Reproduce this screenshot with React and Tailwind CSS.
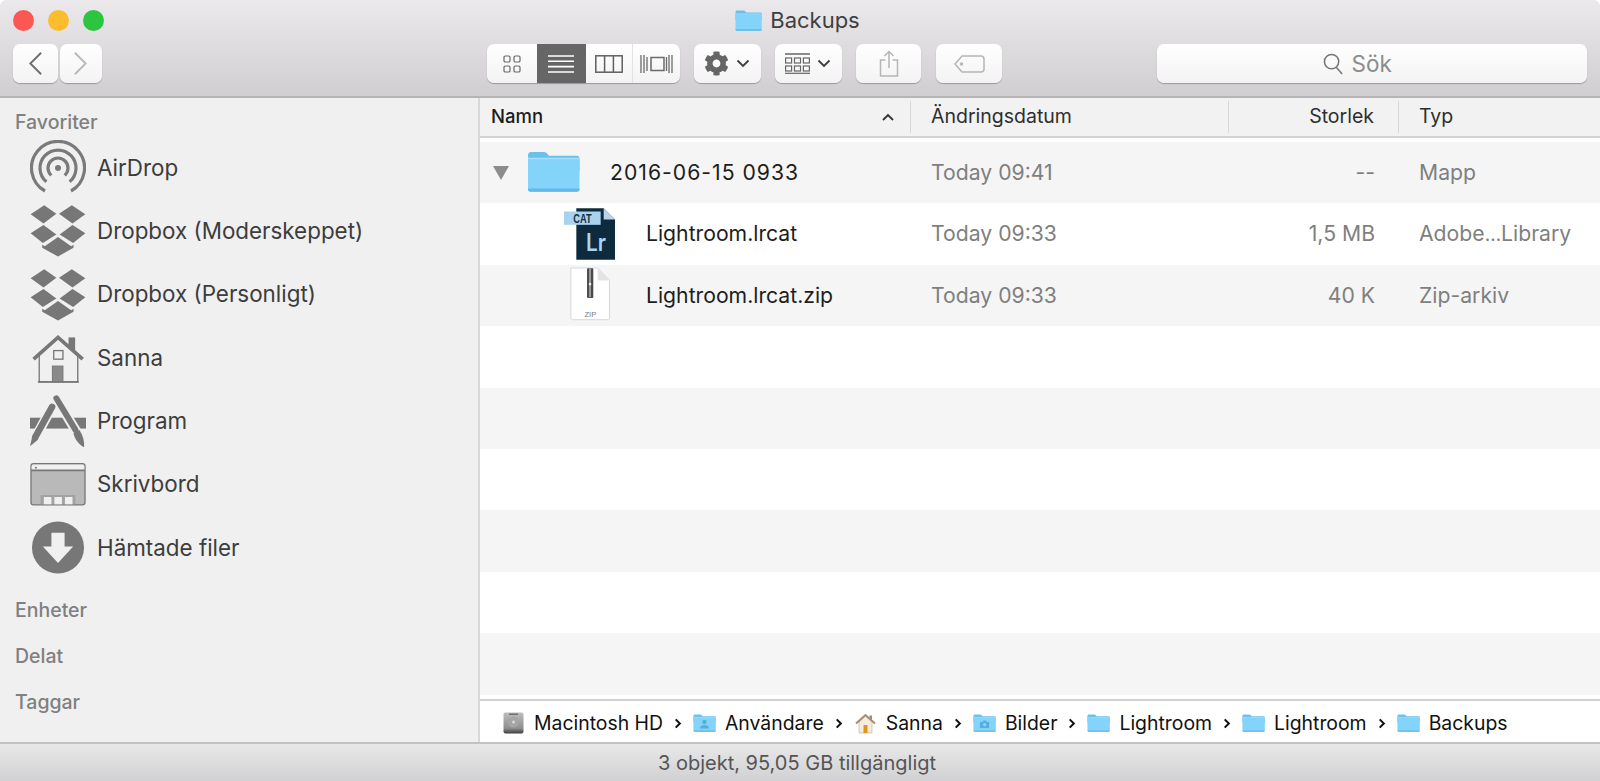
import React from "react";
import { FaCog } from "react-icons/fa";

const Folder = ({ className, glyph }) => {
  return (
    <svg viewBox="0 0 53 41" className={className}>
      <path d="M1 4.500C1 2.500 2 1 4 1h13c1.500 0 2.500.7 3.500 2l1.500 1.800H50c1.500 0 2.500 1 2.500 2.500V20H1z" fill="#6cc1ec" />
      <path d="M1 7.500h51.500V38c0 1.700-1 2.700-2.700 2.700H3.700C2 40.700 1 39.700 1 38z" fill="#83d3fb" />
      <path d="M1 6.800h51.500v1.400H1z" fill="#a4e0fd" />
      <path d="M1 37.500h51.500V38c0 1.700-1 2.700-2.700 2.700H3.700C2 40.700 1 39.700 1 38z" fill="#62b8e6" />
      {glyph === "user" && (
        <g fill="#55aede">
          <circle cx="26.500" cy="18" r="5" />
          <path d="M16 33c1-6 5-8 10.500-8S36 27 37 33z" />
        </g>
      )}
      {glyph === "cam" && (
        <g fill="#55aede">
          <path d="M16 18h6l2-3h6l2 3h5v14H16z" />
          <circle cx="27" cy="24.500" r="4" fill="#83d3fb" />
        </g>
      )}
    </svg>
  );
};

const AirDrop = () => (
  <svg viewBox="0 0 56 56" className="w-[56px] h-[56px]" fill="none" stroke="#7a7a7a" strokeWidth="3.200">
    <path d="M15 51 A26.500 26.500 0 1 1 41 51" />
    <path d="M16.400 41.800 A18 18 0 1 1 39.600 41.800" />
    <path d="M21.300 35.400 A10 10 0 1 1 34.700 35.400" />
    <circle cx="28" cy="28" r="3" fill="#7a7a7a" stroke="none" />
  </svg>
);

const Dropbox = () => (
  <svg viewBox="90 252 170 160" className="w-[56px] h-[53px]" fill="#777777">
    <path d="M92 283 L133 255 L170 281 L131 311 Z" />
    <path d="M258 283 L217 255 L178 281 L219 311 Z" />
    <path d="M92 340 L131 315 L170 344 L129 370 Z" />
    <path d="M258 340 L219 315 L180 344 L221 370 Z" />
    <path d="M175 352 L215 380 L222 375 L222 384 L175 411 L127 384 L127 375 L135 380 Z" />
  </svg>
);

const Home = () => (
  <svg viewBox="90 33 170 155" className="w-[56px] h-[52px]" fill="none" stroke="#777777">
    <rect x="207" y="48" width="20" height="40" fill="#777777" stroke="none" />
    <path d="M118 100V183H235V100L175 50z" fill="#f0f0f0" strokeWidth="4" />
    <path d="M101 114 L175 48 L250 114" strokeWidth="11" />
    <rect x="162" y="88" width="28" height="26" strokeWidth="4" />
    <rect x="158" y="135" width="32" height="48" fill="#8a8a8a" strokeWidth="3" />
    <path d="M114 183H238" strokeWidth="5" />
  </svg>
);

const AppStore = () => (
  <svg viewBox="90 222 170 162" className="w-[56px] h-[54px]">
    <rect x="90" y="293" width="170" height="33" fill="#777777" />
    <path d="M157 260 L103 360" stroke="#f0f0f0" strokeWidth="30" />
    <path d="M170 234 L235 342" stroke="#f0f0f0" strokeWidth="30" />
    <path d="M157 260 L106 352" stroke="#777777" strokeWidth="20" strokeLinecap="round" />
    <path d="M97 349 L115 359 L90 380 Z" fill="#777777" />
    <path d="M170 234 L228 330" stroke="#777777" strokeWidth="18" strokeLinecap="round" />
    <path d="M222 340 L240 330 C250 345 256 365 254 383 C240 375 226 360 222 340 Z" fill="#777777" />
  </svg>
);

const Desktop = () => (
  <svg viewBox="90 425 170 130" className="w-[56px] h-[43px]">
    <rect x="93" y="427" width="164" height="125" rx="8" fill="#b9b9b9" stroke="#777777" strokeWidth="4" />
    <path d="M95 446V435c0-4 2-6 6-6h148c4 0 6 2 6 6v11z" fill="#f0f0f0" />
    <path d="M93 447H257" stroke="#777777" strokeWidth="5" />
    <circle cx="108" cy="439" r="3" fill="#777777" />
    <rect x="122" y="522" width="106" height="28" fill="#a3a3a3" />
    <rect x="132" y="528" width="23" height="22" fill="#f0f0f0" />
    <rect x="164" y="528" width="23" height="22" fill="#f0f0f0" />
    <rect x="196" y="528" width="23" height="22" fill="#f0f0f0" />
  </svg>
);

const Download = () => (
  <svg viewBox="90 600 170 160" className="w-[56px] h-[53px]">
    <circle cx="175" cy="680" r="79" fill="#777777" />
    <path d="M155 635 H195 V677 H221 L175 727 L129 677 H155 Z" fill="#f0f0f0" />
  </svg>
);

const LrIcon = () => (
  <svg viewBox="283 228 153 155" className="w-[51px] h-[52px] shrink-0 mb-[1px]">
    <path d="M320 228H402L436 262V383H320Z" fill="#0d2b3c" />
    <path d="M402 228L436 262H402Z" fill="#b9d5e8" />
    <rect x="283" y="238" width="110" height="40" fill="#a9d2ef" />
    <text x="311" y="272" fontSize="36" fontWeight="700" fill="#14303f" fontFamily="Liberation Sans, sans-serif" textLength="55" lengthAdjust="spacingAndGlyphs">CAT</text>
    <text x="349" y="356" fontSize="72" fontWeight="600" fill="#a6d6f5" fontFamily="Inter, sans-serif" textLength="60" lengthAdjust="spacingAndGlyphs">Lr</text>
  </svg>
);

const ZipIcon = () => (
  <svg viewBox="298 406 126 164" className="w-[42px] h-[54px] shrink-0 mr-[4px] mb-[3px]">
    <path d="M303 409H384L420 446V562C420 565 418 566 416 566H307C305 566 303 565 303 562Z" fill="#ffffff" stroke="#cfcfcf" strokeWidth="2.500" />
    <path d="M384 409V440C384 445 387 447 392 447H420Z" fill="#e3e3e3" />
    <rect x="352" y="410" width="19" height="90" rx="3" fill="#4a4a4a" />
    <rect x="358" y="410" width="6" height="88" fill="#9a9a9a" />
    <circle cx="361" cy="458" r="4" fill="#eeeeee" />
    <text x="344" y="557" fontSize="20" fill="#777777" fontFamily="Liberation Sans, sans-serif" textLength="36" lengthAdjust="spacingAndGlyphs">ZIP</text>
  </svg>
);

const Disk = () => (
  <svg viewBox="0 0 21 22" className="w-[21px] h-[22px]">
    <defs>
      <linearGradient id="dk" x1="0" y1="0" x2="0" y2="1">
        <stop offset="0" stopColor="#bdbdbd" />
        <stop offset="0.75" stopColor="#8f8f8f" />
        <stop offset="1" stopColor="#3c3c3c" />
      </linearGradient>
    </defs>
    <rect x="0.500" y="0.500" width="20" height="21" rx="2" fill="url(#dk)" />
    <circle cx="10.500" cy="10" r="5.500" fill="#a5a5a5" />
    <circle cx="10.500" cy="10" r="1.500" fill="#dadada" />
    <rect x="6" y="1.500" width="9" height="1.500" fill="#6f6f6f" />
  </svg>
);

const SmallHome = () => (
  <svg viewBox="0 0 21 21" className="w-[21px] h-[21px]">
    <path d="M4 9V20H17V9L10.500 3z" fill="#f4ecdf" stroke="#c9bda9" strokeWidth="0.800" />
    <path d="M1 10.500L10.500 2L20 10.500" fill="none" stroke="#a38f70" strokeWidth="2" />
    <rect x="14.500" y="2.500" width="2.500" height="4" fill="#a38f70" />
    <rect x="8.500" y="12" width="4" height="8" fill="#e39222" />
  </svg>
);

const Crumb = ({ icon, label, last }) => (
  <div className="flex items-center">
    <span className="w-[23px] flex justify-center items-center mr-[9px]">{icon}</span>
    <span>{label}</span>
    {!last && (
      <svg viewBox="0 0 8 12" className="w-[8px] h-[11px] mx-[11px]" fill="none" stroke="#111111" strokeWidth="2.200">
        <path d="M1.500 1.500L6 6L1.500 10.500" />
      </svg>
    )}
  </div>
);

const Btn = ({ className = "", children }) => (
  <div className={"flex items-center justify-center h-[39px] rounded-[7px] bg-gradient-to-b from-[#ffffff] to-[#f3f3f3] shadow-[0_1px_1px_rgba(0,0,0,0.28)] " + className}>
    {children}
  </div>
);

const Chev = ({ color = "#3f3f3f" }) => (
  <svg viewBox="0 0 14 9" className="w-[14px] h-[9px]" fill="none" stroke={color} strokeWidth="1.900">
    <path d="M1.500 1.500L7 7L12.500 1.500" />
  </svg>
);

const SideItem = ({ icon, label }) => (
  <div className="flex items-center h-[63.3px] pl-[30px] text-[22.4px] text-[#3d3d3d]">
    <span className="w-[56px] flex items-center justify-center shrink-0 mr-[11px]">{icon}</span>
    <span>{label}</span>
  </div>
);

const Row = ({ grey, level = 0, icon, name, nameClass = "", date, size, type }) => (
  <div className={"grid grid-cols-[431px_318px_170px_1fr] h-[61.4px] items-center text-[21.2px] " + (grey ? "bg-[#f5f5f5]" : "bg-white")}>
    <div className="flex items-center text-[#1d1d1d]">
      {level === 1 && (
        <>
          <span className="w-[13px] ml-[13px] flex">
            <svg viewBox="0 0 16 14" className="w-[16px] h-[14px] shrink-0" fill="#8c8c8c"><path d="M0 0H16L8 14Z" /></svg>
          </span>
          <span className="ml-[21px] mr-[30px] flex mb-[2px]">{icon}</span>
          <span className={nameClass}>{name}</span>
        </>
      )}
      {level === 2 && (
        <>
          <span className="w-[135px] flex justify-end">{icon}</span>
          <span className="ml-[31px]">{name}</span>
        </>
      )}
    </div>
    <div className="pl-[20px] text-[#7f7f7f]">{date}</div>
    <div className="pr-[24px] text-right text-[#7f7f7f]">{size}</div>
    <div className="pl-[20px] text-[#7f7f7f] whitespace-nowrap">{type}</div>
  </div>
);

const Heading = ({ className = "", children }) => (
  <h2 className={"pl-[15px] h-[22px] leading-[22px] text-[19.5px] font-medium text-[#808080] " + className}>{children}</h2>
);

export default function App() {
  return (
    <div className="w-[1600px] h-[781px] flex flex-col overflow-hidden bg-white font-[Inter,sans-serif]">
      <header className="h-[98px] shrink-0 bg-gradient-to-b from-[#ebe9eb] to-[#d0ced0] border-b-2 border-[#b5b5b5] rounded-t-[6px] px-[13px]">
        <div className="grid grid-cols-[1fr_auto_1fr] items-center h-[44px] pb-[4px]">
          <div className="flex gap-[14px]">
            <span className="w-[21px] h-[21px] rounded-full bg-[#fc5753]"></span>
            <span className="w-[21px] h-[21px] rounded-full bg-[#fdbc2e]"></span>
            <span className="w-[21px] h-[21px] rounded-full bg-[#2cc53f]"></span>
          </div>
          <div className="flex items-center gap-[8px] text-[22px] text-[#3f3f3f] pr-[5px]">
            <Folder className="w-[27px] h-[21px]" />
            <span>Backups</span>
          </div>
          <div></div>
        </div>
        <div className="flex items-center">
          <Btn className="w-[45px]">
            <svg viewBox="0 0 16 26" className="w-[15px] h-[25px]" fill="none" stroke="#6e6e6e" strokeWidth="2"><path d="M14 1.500L2.500 13L14 24.500" /></svg>
          </Btn>
          <Btn className="w-[42px] ml-[2px]">
            <svg viewBox="0 0 16 26" className="w-[15px] h-[25px]" fill="none" stroke="#b9b9b9" strokeWidth="2"><path d="M2 1.500L13.500 13L2 24.500" /></svg>
          </Btn>
          <Btn className="w-[193px] ml-[385px] overflow-hidden !justify-start">
            <div className="w-[50px] h-full flex items-center justify-center">
              <svg viewBox="0 0 18 18" className="w-[18px] h-[18px]" fill="none" stroke="#666666" strokeWidth="1.200">
                <rect x="1" y="1" width="6" height="6" rx="1.300" /><rect x="11" y="1" width="6" height="6" rx="1.300" />
                <rect x="1" y="11" width="6" height="6" rx="1.300" /><rect x="11" y="11" width="6" height="6" rx="1.300" />
              </svg>
            </div>
            <div className="w-[49px] h-full flex items-center justify-center bg-[#666666]">
              <svg viewBox="0 0 26 20" className="w-[26px] h-[20px]" stroke="#ffffff" strokeWidth="1.600">
                <path d="M0 2H26M0 7.300H26M0 12.600H26M0 18H26" />
              </svg>
            </div>
            <div className="w-[47px] h-full flex items-center justify-center border-r border-[#e2e2e2]">
              <svg viewBox="0 0 28 18" className="w-[28px] h-[18px]" fill="none" stroke="#5f5f5f" strokeWidth="1.500">
                <rect x="0.800" y="0.800" width="26.400" height="16.400" /><path d="M9.600 1V17M18.400 1V17" />
              </svg>
            </div>
            <div className="w-[47px] h-full flex items-center justify-center">
              <svg viewBox="0 0 33 20" className="w-[33px] h-[20px]" fill="none" stroke="#6a6a6a" strokeWidth="1.300">
                <path d="M1 1V19M4 1V19M7 3V17M32 1V19M29 1V19" />
                <rect x="11" y="3.500" width="13" height="13" strokeWidth="1.500" />
                <path d="M26.500 3V17" />
              </svg>
            </div>
          </Btn>
          <Btn className="w-[67px] ml-[14px] gap-[7px]">
            <FaCog className="w-[25px] h-[25px] text-[#666666]" />
            <Chev />
          </Btn>
          <Btn className="w-[67px] ml-[14px] gap-[7px]">
            <svg viewBox="0 0 25 21" className="w-[25px] h-[21px]" fill="none" stroke="#666666" strokeWidth="1.200">
              <path d="M0 1H25" strokeWidth="1.500" />
              <rect x="0.600" y="5" width="6" height="5" /><rect x="9.500" y="5" width="6" height="5" /><rect x="18.400" y="5" width="6" height="5" />
              <rect x="0.600" y="13" width="6" height="5" /><rect x="9.500" y="13" width="6" height="5" /><rect x="18.400" y="13" width="6" height="5" />
              <path d="M0 20.300H25" strokeWidth="1.200" />
            </svg>
            <Chev />
          </Btn>
          <Btn className="w-[66px] ml-[14px]">
            <svg viewBox="0 0 20 27" className="w-[20px] h-[27px]" fill="none" stroke="#b5b5b5" strokeWidth="1.500">
              <path d="M6.500 10H1.500V26H18.500V10H13.500" />
              <path d="M10 18V1.500M5.500 6L10 1.500L14.500 6" />
            </svg>
          </Btn>
          <Btn className="w-[66px] ml-[15px]">
            <svg viewBox="0 0 31 18" className="w-[31px] h-[18px]" fill="none" stroke="#b5b5b5" strokeWidth="1.500">
              <path d="M8 1H27C29 1 30 2 30 4V14C30 16 29 17 27 17H8L1 9Z" />
              <circle cx="7.500" cy="9" r="1" />
            </svg>
          </Btn>
          <Btn className="w-[430px] ml-[155px] pr-[30px] gap-[9px] text-[22.5px] text-[#8c8c8c]">
            <svg viewBox="0 0 21 23" className="w-[20px] h-[22px]" fill="none" stroke="#757575" strokeWidth="1.600">
              <circle cx="9" cy="9" r="7.500" /><path d="M14 15L20 22" />
            </svg>
            <span>Sök</span>
          </Btn>
        </div>
      </header>

      <main className="flex-1 flex min-h-0">
        <aside className="w-[480px] shrink-0 bg-[#f0f0f0] border-r-2 border-[#d9d9d9] pt-[13px]">
          <Heading>Favoriter</Heading>
          <div className="mt-[3px]">
            <SideItem icon={<AirDrop />} label="AirDrop" />
            <SideItem icon={<Dropbox />} label="Dropbox (Moderskeppet)" />
            <SideItem icon={<Dropbox />} label="Dropbox (Personligt)" />
            <SideItem icon={<Home />} label="Sanna" />
            <SideItem icon={<AppStore />} label="Program" />
            <SideItem icon={<Desktop />} label="Skrivbord" />
            <SideItem icon={<Download />} label="Hämtade filer" />
          </div>
          <Heading className="mt-[20px]">Enheter</Heading>
          <Heading className="mt-[24px]">Delat</Heading>
          <Heading className="mt-[24px]">Taggar</Heading>
        </aside>

        <section className="flex-1 min-w-0 flex flex-col">
          <div className="h-[40px] shrink-0 grid grid-cols-[431px_318px_170px_1fr] items-center bg-[#f2f2f2] border-b-2 border-[#d2d2d2] text-[19.5px] text-[#2e2e2e]">
            <div className="flex items-center justify-between pl-[11px] pr-[16px] h-[32px] border-r border-[#d8d8d8]">
              <span className="font-medium text-[#1c1c1c] text-[18.5px]">Namn</span>
              <svg viewBox="0 0 12 8" className="w-[12px] h-[8px]" fill="none" stroke="#333333" strokeWidth="1.800"><path d="M1 7L6 2L11 7" /></svg>
            </div>
            <div className="pl-[20px] h-[32px] flex items-center border-r border-[#d8d8d8]">Ändringsdatum</div>
            <div className="pr-[24px] h-[32px] flex items-center justify-end border-r border-[#d8d8d8]">Storlek</div>
            <div className="pl-[20px]">Typ</div>
          </div>
          <div className="h-[4px] bg-white shrink-0"></div>
          <div className="flex-1 min-h-0">
            <Row grey level={1} icon={<Folder className="w-[53px] h-[41px]" />} name="2016-06-15 0933" nameClass="tracking-[1px]" date="Today 09:41" size="--" type="Mapp" />
            <Row level={2} icon={<LrIcon />} name="Lightroom.lrcat" date="Today 09:33" size="1,5 MB" type={<>Adobe<span className="text-[19px]">…</span>Library</>} />
            <Row grey level={2} icon={<ZipIcon />} name="Lightroom.lrcat.zip" date="Today 09:33" size="40 K" type="Zip-arkiv" />
            <div className="h-[61.4px] bg-white"></div>
            <div className="h-[61.4px] bg-[#f5f5f5]"></div>
            <div className="h-[61.4px] bg-white"></div>
            <div className="h-[61.4px] bg-[#f5f5f5]"></div>
            <div className="h-[61.4px] bg-white"></div>
            <div className="h-[61.4px] bg-[#f5f5f5]"></div>
          </div>
          <div className="h-[43px] shrink-0 flex items-center bg-white border-t-2 border-[#d2d2d2] pl-[22px] pt-[4px] text-[19.4px] text-[#111111]">
            <Crumb icon={<Disk />} label="Macintosh HD" />
            <Crumb icon={<Folder className="w-[23px] h-[18px]" glyph="user" />} label="Användare" />
            <Crumb icon={<SmallHome />} label="Sanna" />
            <Crumb icon={<Folder className="w-[23px] h-[18px]" glyph="cam" />} label="Bilder" />
            <Crumb icon={<Folder className="w-[23px] h-[18px]" />} label="Lightroom" />
            <Crumb icon={<Folder className="w-[23px] h-[18px]" />} label="Lightroom" />
            <Crumb icon={<Folder className="w-[23px] h-[18px]" />} label="Backups" last />
          </div>
        </section>
      </main>

      <footer className="h-[39px] shrink-0 flex items-center justify-center bg-gradient-to-b from-[#e9e8e9] to-[#d1d0d2] border-t-2 border-[#c2c2c2] text-[20px] text-[#555555] pr-[6px]">
        3 objekt, 95,05 GB tillgängligt
      </footer>
    </div>
  );
}
